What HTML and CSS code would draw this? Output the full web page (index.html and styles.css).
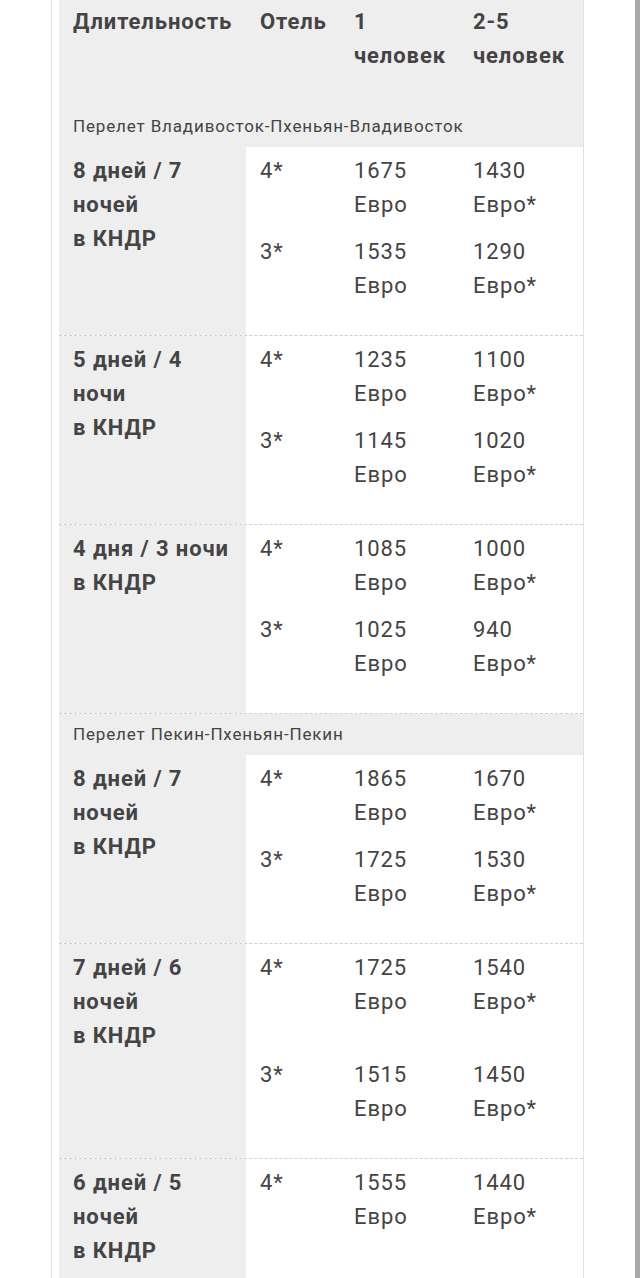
FILE: index.html
```html
<!DOCTYPE html>
<html lang="ru">
<head>
<meta charset="utf-8">
<title>Цены</title>
<link rel="stylesheet" href="styles.css">
</head>
<body>
<div class="page">
  <div class="frame">
    <div class="table">
      <div class="head">
        <div class="hc">Длительность</div>
        <div class="hc">Отель</div>
        <div class="hc">1<br>человек</div>
        <div class="hc">2-5<br>человек</div>
      </div>
      <div class="section">Перелет Владивосток-Пхеньян-Владивосток</div>

      <div class="row">
        <div class="dur">8 дней / 7<br>ночей<br>в КНДР</div>
        <div class="prices">
          <div class="sub"><div class="c">4*</div><div class="c">1675<br>Евро</div><div class="c">1430<br>Евро*</div></div>
          <div class="sub"><div class="c">3*</div><div class="c">1535<br>Евро</div><div class="c">1290<br>Евро*</div></div>
        </div>
      </div>

      <div class="row">
        <div class="dur">5 дней / 4<br>ночи<br>в КНДР</div>
        <div class="prices">
          <div class="sub"><div class="c">4*</div><div class="c">1235<br>Евро</div><div class="c">1100<br>Евро*</div></div>
          <div class="sub"><div class="c">3*</div><div class="c">1145<br>Евро</div><div class="c">1020<br>Евро*</div></div>
        </div>
      </div>

      <div class="row">
        <div class="dur">4 дня / 3 ночи<br>в КНДР</div>
        <div class="prices">
          <div class="sub"><div class="c">4*</div><div class="c">1085<br>Евро</div><div class="c">1000<br>Евро*</div></div>
          <div class="sub"><div class="c">3*</div><div class="c">1025<br>Евро</div><div class="c">940<br>Евро*</div></div>
        </div>
      </div>

      <div class="section">Перелет Пекин-Пхеньян-Пекин</div>

      <div class="row">
        <div class="dur">8 дней / 7<br>ночей<br>в КНДР</div>
        <div class="prices">
          <div class="sub"><div class="c">4*</div><div class="c">1865<br>Евро</div><div class="c">1670<br>Евро*</div></div>
          <div class="sub"><div class="c">3*</div><div class="c">1725<br>Евро</div><div class="c">1530<br>Евро*</div></div>
        </div>
      </div>

      <div class="row">
        <div class="dur">7 дней / 6<br>ночей<br>в КНДР</div>
        <div class="prices wide">
          <div class="sub"><div class="c">4*</div><div class="c">1725<br>Евро</div><div class="c">1540<br>Евро*</div></div>
          <div class="sub"><div class="c">3*</div><div class="c">1515<br>Евро</div><div class="c">1450<br>Евро*</div></div>
        </div>
      </div>

      <div class="row last">
        <div class="dur">6 дней / 5<br>ночей<br>в КНДР</div>
        <div class="prices">
          <div class="sub"><div class="c">4*</div><div class="c">1555<br>Евро</div><div class="c">1440<br>Евро*</div></div>
        </div>
      </div>
    </div>
  </div>
  <div class="scrollbar"></div>
</div>
</body>
</html>
```
FILE: styles.css
```css
html, body {
  margin: 0;
  padding: 0;
  background: #ffffff;
}

body {
  font-family: Roboto, "Liberation Sans", Arial, sans-serif;
  color: #444444;
  font-size: 22px;
  letter-spacing: 0.9px;
  line-height: 34px;
}

.page {
  display: flex;
  min-height: 1278px;
  overflow: hidden;
}

.frame {
  margin-left: 51px;
  width: 524px;
  border-left: 1px solid #e2e2e2;
  border-right: 1px solid #e2e2e2;
  padding-left: 7px;
  min-height: 1278px;
}

.table {
  width: 524px;
  min-height: 1278px;
  display: flex;
  flex-direction: column;
}

.head {
  display: grid;
  grid-template-columns: 187px 94px 119px 1fr;
  background: #eeeeee;
  padding: 5px 0 33px;
  font-weight: 700;
}

.hc {
  padding-left: 14px;
  white-space: nowrap;
}

.section {
  background: #eeeeee;
  height: 41px;
  line-height: 41px;
  font-size: 17px;
  letter-spacing: 0.85px;
  padding-left: 14px;
  white-space: nowrap;
}

.row {
  display: grid;
  grid-template-columns: 187px 1fr;
  border-bottom: 1px dashed #cfcfcf;
}

.row.last {
  border-bottom: none;
  flex: 1;
}

.dur {
  background: #eeeeee;
  font-weight: 700;
  padding: 7px 14px 0;
  white-space: nowrap;
}

.prices {
  display: flex;
  flex-direction: column;
  gap: 13px;
  padding: 7px 0 32px;
}

.prices.wide {
  gap: 39px;
}

.sub {
  display: grid;
  grid-template-columns: 94px 119px 1fr;
}

.c {
  padding-left: 14px;
  white-space: nowrap;
}

.scrollbar {
  margin-left: auto;
  width: 5px;
  background: #a9a9a9;
  align-self: stretch;
}
```
